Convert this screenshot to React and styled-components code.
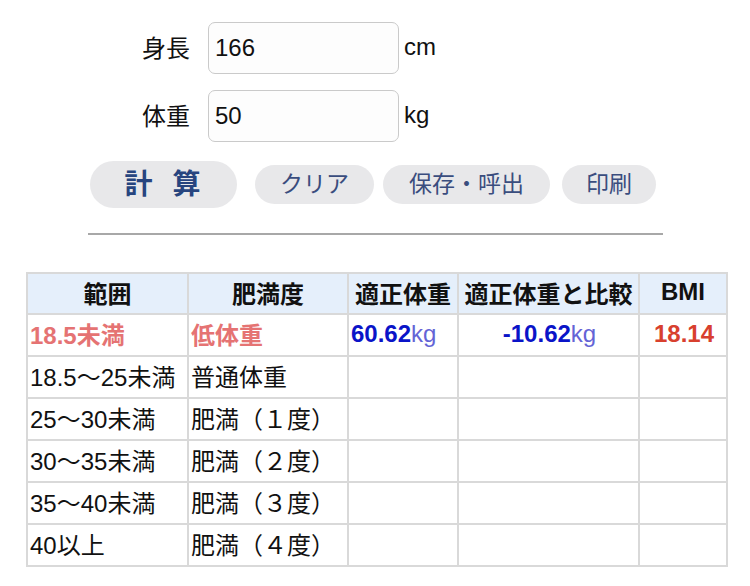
import React from "react";
import styled, { createGlobalStyle } from "styled-components";

const Global = createGlobalStyle`
  html, body { margin: 0; padding: 0; background: #fff; }
  body { font-family: "Liberation Sans", "Noto Sans CJK JP", sans-serif; color: #111; }
`;

const Page = styled.div`
  width: 750px;
  padding-top: 22px;
`;

const Form = styled.div`
  display: flex;
  flex-direction: column;
  gap: 16px;
  padding-left: 142px;
`;

const FieldRow = styled.div`
  display: flex;
  align-items: center;
  height: 52px;
`;

const Label = styled.span`
  font-size: 24px;
  width: 66px;
  margin-bottom: 3px;
`;

const Input = styled.input`
  box-sizing: border-box;
  width: 191px;
  height: 52px;
  border: 1.5px solid #cacaca;
  border-radius: 7px;
  background: #fdfdfd;
  font-family: "Liberation Sans", sans-serif;
  font-size: 24px;
  padding: 0 0 0 6px;
  color: #111;
  outline: none;
`;

const Unit = styled.span`
  font-size: 24px;
  margin-left: 5px;
  margin-bottom: 2px;
`;

const ButtonRow = styled.div`
  display: flex;
  align-items: center;
  margin: 19px 0 0 90px;
  height: 47px;
`;

const Button = styled.button`
  box-sizing: border-box;
  border: none;
  background: #e8e8ea;
  border-radius: 24px;
  font-family: "Liberation Sans", "Noto Sans CJK JP", sans-serif;
  color: ${(p) => (p.$primary ? "#27457f" : "#3a4d7e")};
  font-weight: ${(p) => (p.$primary ? 700 : 400)};
  font-size: ${(p) => (p.$primary ? "28px" : "23px")};
  letter-spacing: ${(p) => (p.$primary ? "20px" : "0")};
  width: ${(p) => p.$w}px;
  height: ${(p) => (p.$primary ? 47 : 39)}px;
  margin-right: ${(p) => p.$mr}px;
  padding: 0;
  padding-left: ${(p) => (p.$primary ? "18px" : "0")};
  line-height: 1;
`;

const Rule = styled.hr`
  margin: 25px 0 0 88px;
  width: 575px;
  border: none;
  height: 2px;
  background: #a8a8a8;
`;

const Table = styled.table`
  margin: 37px 0 0 26px;
  border-collapse: collapse;
  table-layout: fixed;
  width: 701px;
  font-size: 24px;
`;

const Th = styled.th`
  border: 2px solid #d9d9d9;
  background: #e5effb;
  height: 36px;
  padding: 0 0 3px;
  font-weight: 700;
  text-align: center;
  white-space: nowrap;
  color: #111;
`;

const Td = styled.td`
  border: 2px solid #d9d9d9;
  height: 37px;
  padding: 0 0 3px 2px;
  white-space: nowrap;
  text-align: ${(p) => (p.$center ? "center" : "left")};
  color: ${(p) => p.$color || "#111"};
  font-weight: ${(p) => (p.$bold ? 700 : 400)};
`;

const Num = styled.span`
  font-weight: 700;
  color: #0a14c8;
`;

const KgUnit = styled.span`
  font-weight: 400;
  color: #6464d6;
`;

const rows = [
  ["18.5〜25未満", "普通体重"],
  ["25〜30未満", "肥満（１度）"],
  ["30〜35未満", "肥満（２度）"],
  ["35〜40未満", "肥満（３度）"],
  ["40以上", "肥満（４度）"],
];

export default function App() {
  return (
    <Page>
      <Global />
      <Form>
        <FieldRow>
          <Label>身長</Label>
          <Input defaultValue="166" />
          <Unit>cm</Unit>
        </FieldRow>
        <FieldRow>
          <Label>体重</Label>
          <Input defaultValue="50" />
          <Unit>kg</Unit>
        </FieldRow>
      </Form>
      <ButtonRow>
        <Button $primary $w={147} $mr={18}>計算</Button>
        <Button $w={119} $mr={9}>クリア</Button>
        <Button $w={167} $mr={12}>保存・呼出</Button>
        <Button $w={94} $mr={0}>印刷</Button>
      </ButtonRow>
      <Rule />
      <Table>
        <colgroup>
          <col style={{ width: 161 }} />
          <col style={{ width: 160 }} />
          <col style={{ width: 110 }} />
          <col style={{ width: 181 }} />
          <col style={{ width: 88 }} />
        </colgroup>
        <thead>
          <tr>
            <Th>範囲</Th>
            <Th>肥満度</Th>
            <Th>適正体重</Th>
            <Th>適正体重と比較</Th>
            <Th>BMI</Th>
          </tr>
        </thead>
        <tbody>
          <tr>
            <Td $bold $color="#e57373">18.5未満</Td>
            <Td $bold $color="#e57373">低体重</Td>
            <Td>
              <Num>60.62</Num>
              <KgUnit>kg</KgUnit>
            </Td>
            <Td $center>
              <Num>-10.62</Num>
              <KgUnit>kg</KgUnit>
            </Td>
            <Td $center $bold $color="#d8402e">18.14</Td>
          </tr>
          {rows.map(([a, b]) => (
            <tr key={a}>
              <Td>{a}</Td>
              <Td>{b}</Td>
              <Td />
              <Td />
              <Td />
            </tr>
          ))}
        </tbody>
      </Table>
    </Page>
  );
}
